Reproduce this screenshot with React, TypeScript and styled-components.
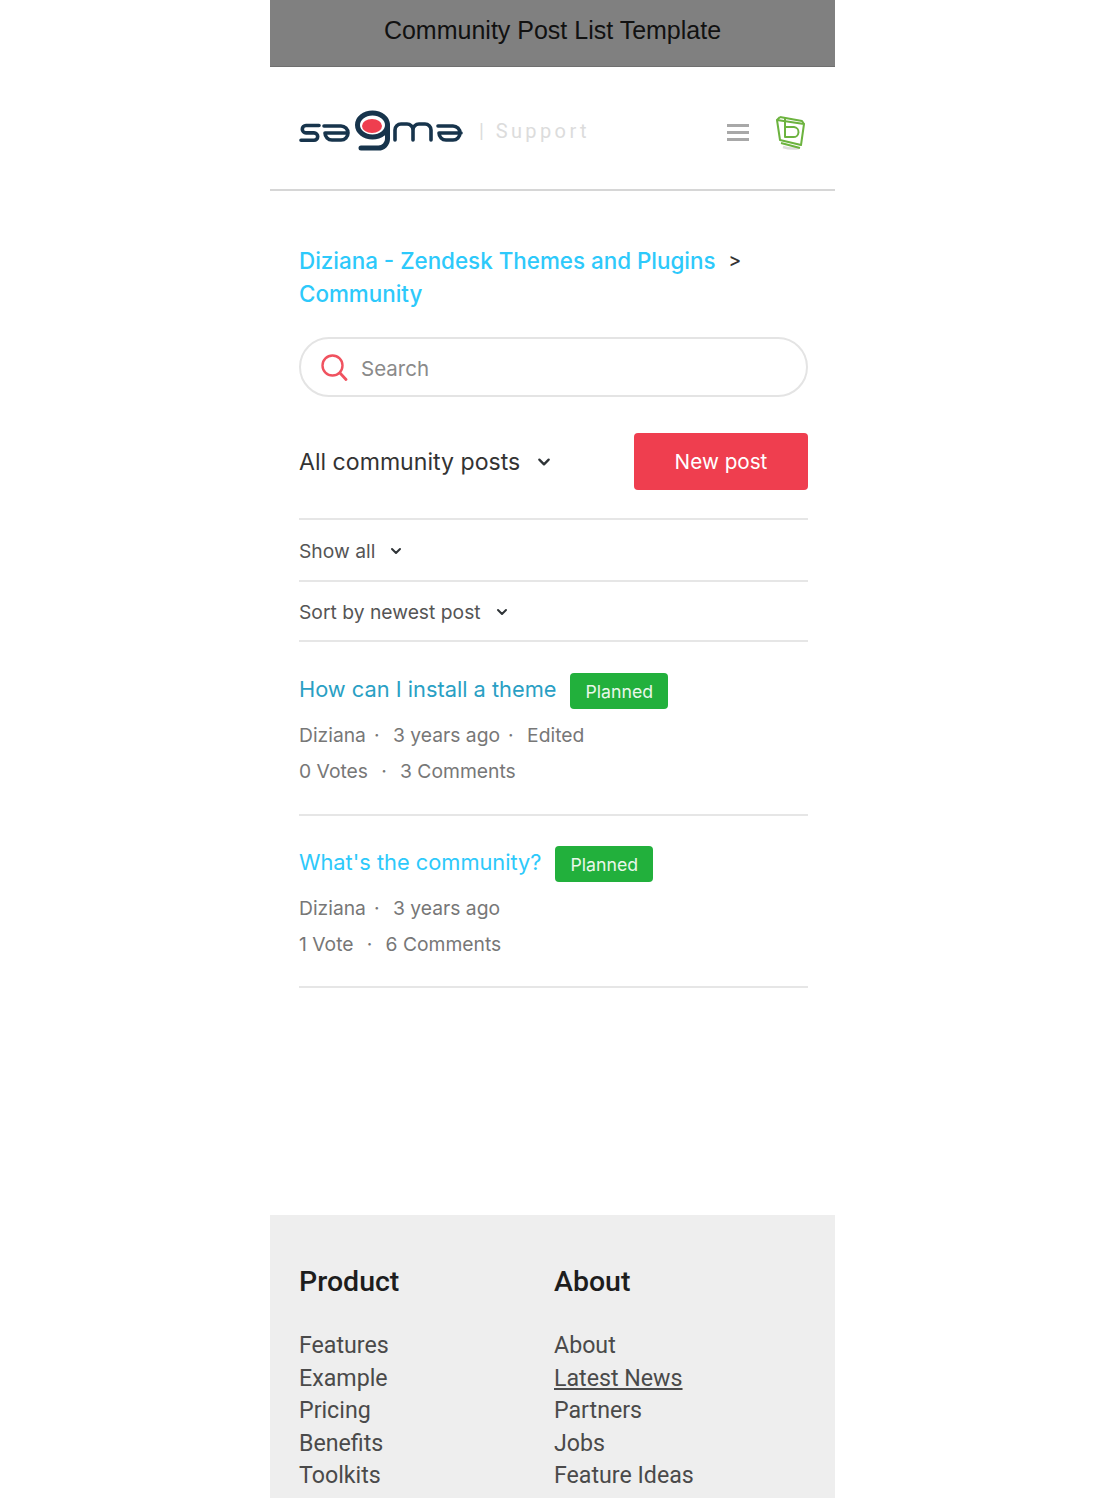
import React from 'react';
import styled, { createGlobalStyle } from 'styled-components';

const posts = [
  { title: "How can I install a theme", visited: true, meta: ['Diziana', '3 years ago', 'Edited'], votes: '0 Votes', comments: '3 Comments' },
  { title: "What's the community?", visited: false, meta: ['Diziana', '3 years ago'], votes: '1 Vote', comments: '6 Comments' },
];

const footer = [
  { title: 'Product', links: ['Features', 'Example', 'Pricing', 'Benefits', 'Toolkits'] },
  { title: 'About', links: ['About', 'Latest News', 'Partners', 'Jobs', 'Feature Ideas'] },
];

const Chevron: React.FC<{ size?: number }> = ({ size = 12 }) => (
  <svg width={size} height={size} viewBox="0 0 12 12" fill="none" stroke="#2f3437" strokeWidth="2" strokeLinecap="round" strokeLinejoin="round">
    <path d="M2 4l4 4 4-4" />
  </svg>
);

const Logo: React.FC = () => (
  <svg width="164" height="42" viewBox="0 0 164 42" fill="none">
    <g stroke="#17344c" strokeWidth="3.600" strokeLinecap="round" strokeLinejoin="round">
      <path d="M20 15.500H7a3.700 3.700 0 0 0 0 7.400h8a3.700 3.700 0 0 1 0 7.400H2" />
      <path d="M25 16h17a7 7 0 0 1 0 14h-9a7 7 0 0 1-7-7h23" />
      <path d="M96 30V20a6 6 0 0 1 6-6h6a6 6 0 0 1 6 6v10M114 20a6 6 0 0 1 6-6h6a6 6 0 0 1 6 6v10" />
      <path d="M139 16h15a7 7 0 0 1 0 14h-7a7 7 0 0 1-7-7h22" />
    </g>
    <g stroke="#17344c" strokeWidth="5" strokeLinecap="round">
      <ellipse cx="73.500" cy="15" rx="15" ry="12" />
      <path d="M88.500 15v14a9 9 0 0 1-9 9H62" />
    </g>
    <ellipse cx="73" cy="16" rx="10" ry="7" fill="#ef3e4f" />
  </svg>
);

const BrandMark: React.FC = () => (
  <svg width="32" height="38" viewBox="0 0 32 38" fill="none">
    <path d="M9 35c6 2 11 2 16 1" stroke="#dcdcdc" strokeWidth="2.500" />
    <g stroke="#6cb33f" strokeWidth="2" strokeLinejoin="round">
      <path d="M3 8l27 4-3 21-21-5z" />
      <path d="M6 5l-3 3M6 5l22 4 2 3" />
      <path d="M11 6v19h8a5 5 0 0 0 1-10h-9" />
      <path d="M7 31l19 5" />
    </g>
  </svg>
);

const App: React.FC = () => (
  <>
    <GlobalStyle />
    <Page>
      <Frame>
        <TitleBar>Community Post List Template</TitleBar>
        <Header>
          <Brand>
            <Logo />
            <SupportLabel>| Support</SupportLabel>
          </Brand>
          <HeaderIcons>
            <Burger>
              <BurgerLine />
              <BurgerLine />
              <BurgerLine />
            </Burger>
            <BrandMark />
          </HeaderIcons>
        </Header>

        <Main>
          <Breadcrumbs>
            <CrumbLine>
              <CrumbLink>Diziana - Zendesk Themes and Plugins</CrumbLink>
              <CrumbSeparator>&gt;</CrumbSeparator>
            </CrumbLine>
            <CrumbLine>
              <CrumbLink>Community</CrumbLink>
            </CrumbLine>
          </Breadcrumbs>

          <SearchBox>
            <svg width="28" height="28" viewBox="0 0 28 28" fill="none" stroke="#f0525f" strokeWidth="2.400" strokeLinecap="round">
              <circle cx="12.500" cy="12.500" r="10" />
              <path d="M20 20l6 6.500" strokeWidth="2.800" />
            </svg>
            <SearchText>Search</SearchText>
          </SearchBox>

          <TopicRow>
            <TopicSelect>
              All community posts
              <Chevron size={14} />
            </TopicSelect>
            <NewPostButton>New post</NewPostButton>
          </TopicRow>

          <FilterRow $height={62}>
            Show all
            <Chevron />
          </FilterRow>
          <FilterRow $height={60}>
            Sort by newest post
            <Chevron />
          </FilterRow>

          {posts.map((post) => (
            <PostItem key={post.title}>
              <PostTitleRow>
                <PostTitle $visited={post.visited}>{post.title}</PostTitle>
                <StatusBadge>Planned</StatusBadge>
              </PostTitleRow>
              <MetaRow>
                {post.meta.map((item, i) => (
                  <React.Fragment key={item}>
                    {i > 0 && <MetaDot>·</MetaDot>}
                    <span>{item}</span>
                  </React.Fragment>
                ))}
              </MetaRow>
              <MetaRow>
                <span>{post.votes}</span>
                <MetaDot $wide>·</MetaDot>
                <span>{post.comments}</span>
              </MetaRow>
            </PostItem>
          ))}
        </Main>

        <Footer>
          {footer.map((col) => (
            <FooterColumn key={col.title}>
              <FooterTitle>{col.title}</FooterTitle>
              {col.links.map((link) => (
                <FooterLink key={link} $underline={link === 'Latest News'}>{link}</FooterLink>
              ))}
            </FooterColumn>
          ))}
        </Footer>
      </Frame>
    </Page>
  </>
);

const GlobalStyle = createGlobalStyle`
  html, body {
    margin: 0;
    padding: 0;
    background: #fff;
  }
  body {
    font-family: Inter, "Liberation Sans", sans-serif;
  }
`;

const Page = styled.div`
  height: 1498px;
  overflow: hidden;
  padding-left: 270px;
`;

const Frame = styled.div`
  width: 565px;
`;

const TitleBar = styled.div`
  height: 67px;
  display: flex;
  align-items: center;
  justify-content: center;
  box-sizing: border-box;
  padding-bottom: 6px;
  background: #808080;
  border-bottom: 1px solid #6f6f6f;
  font-family: "Liberation Sans", Arial, sans-serif;
  font-size: 25px;
  color: #111;
`;

const Header = styled.header`
  height: 124px;
  box-sizing: border-box;
  display: flex;
  align-items: center;
  justify-content: space-between;
  padding: 5px 29px 0 29px;
  border-bottom: 2px solid #d6d6d6;
`;

const Brand = styled.div`
  display: flex;
  align-items: center;
  gap: 16px;
`;

const SupportLabel = styled.span`
  font-family: Roboto, sans-serif;
  font-size: 20px;
  letter-spacing: 3.400px;
  color: #dcdcdc;
`;

const HeaderIcons = styled.div`
  display: flex;
  align-items: center;
  gap: 25px;
`;

const Burger = styled.div`
  display: flex;
  flex-direction: column;
  gap: 4px;
  width: 22px;
  margin-top: 4px;
`;

const BurgerLine = styled.div`
  height: 3px;
  background: #a8a8a8;
`;

const Main = styled.main`
  height: 1024px;
  box-sizing: border-box;
  padding: 53px 27px 0 29px;
`;

const Breadcrumbs = styled.div`
  font-size: 22.400px;
  font-weight: 500;
`;

const CrumbLine = styled.div`
  display: flex;
  align-items: center;
  height: 33px;
`;

const CrumbLink = styled.a`
  color: #2dc9fb;
`;

const CrumbSeparator = styled.span`
  margin-left: 13px;
  font-size: 19px;
  color: #333;
`;

const SearchBox = styled.div`
  height: 60px;
  box-sizing: border-box;
  margin-top: 27px;
  padding-left: 19px;
  display: flex;
  align-items: center;
  gap: 13px;
  border: 2px solid #e4e4e4;
  border-radius: 30px;
`;

const SearchText = styled.span`
  padding-top: 2px;
  font-size: 20.500px;
  color: #8a8a8a;
`;

const TopicRow = styled.div`
  height: 123px;
  box-sizing: border-box;
  padding-top: 36px;
  display: flex;
  justify-content: space-between;
  align-items: flex-start;
  border-bottom: 2px solid #e6e6e6;
`;

const TopicSelect = styled.div`
  height: 57px;
  display: flex;
  align-items: center;
  gap: 17px;
  font-size: 23.100px;
  color: #333;
`;

const NewPostButton = styled.button`
  width: 174px;
  height: 57px;
  border: 0;
  border-radius: 4px;
  background: #ef3e4f;
  color: #fff;
  font-family: inherit;
  font-size: 20.700px;
`;

const FilterRow = styled.div<{ $height: number }>`
  height: ${({ $height }) => $height}px;
  box-sizing: border-box;
  padding-top: 2px;
  display: flex;
  align-items: center;
  gap: 15px;
  border-bottom: 2px solid #e6e6e6;
  font-size: 19.300px;
  color: #555;
`;

const PostItem = styled.article`
  height: 172px;
  box-sizing: border-box;
  padding-top: 30px;
  border-bottom: 2px solid #e6e6e6;

  &:first-of-type {
    height: 174px;
    padding-top: 31px;
  }
`;

const PostTitleRow = styled.div`
  display: flex;
  align-items: center;
  gap: 14px;
  height: 36px;
  margin-bottom: 8px;
`;

const PostTitle = styled.a<{ $visited: boolean }>`
  padding-bottom: 4px;
  font-size: 21.800px;
  color: ${({ $visited }) => ($visited ? '#2a9fc4' : '#2dc9fb')};
`;

const StatusBadge = styled.span`
  height: 36px;
  padding: 0 15px;
  display: flex;
  align-items: center;
  border-radius: 4px;
  background: #22b03c;
  color: #e9f7ea;
  font-size: 17.700px;
`;

const MetaRow = styled.div`
  display: flex;
  align-items: center;
  height: 36px;
  font-size: 19.300px;
  color: #777;
`;

const MetaDot = styled.span<{ $wide?: boolean }>`
  width: ${({ $wide }) => ($wide ? '32px' : '27px')};
  text-align: ${({ $wide }) => ($wide ? 'center' : 'left')};
  padding-left: ${({ $wide }) => ($wide ? '0' : '8px')};
  box-sizing: border-box;
`;

const Footer = styled.footer`
  height: 283px;
  box-sizing: border-box;
  padding: 48px 0 0 29px;
  display: flex;
  background: #eeeeee;
`;

const FooterColumn = styled.div`
  width: 255px;
  display: flex;
  flex-direction: column;
`;

const FooterTitle = styled.h3`
  margin: 0 0 28px;
  font-family: Roboto, sans-serif;
  font-size: 28.500px;
  line-height: 38px;
  font-weight: 500;
  color: #1d1d1d;
`;

const FooterLink = styled.a<{ $underline: boolean }>`
  font-family: Roboto, sans-serif;
  font-size: 23.200px;
  line-height: 32.500px;
  color: #4a4a4a;
  text-decoration: ${({ $underline }) => ($underline ? 'underline' : 'none')};
`;

export default App;
